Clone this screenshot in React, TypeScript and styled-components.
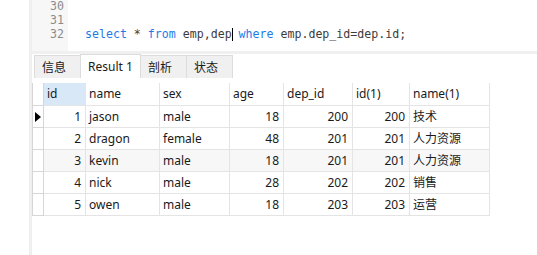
import React from 'react'
import styled, { createGlobalStyle } from 'styled-components'

const GlobalStyle = createGlobalStyle`
  html, body {
    margin: 0;
    padding: 0;
    background: #ffffff;
  }
  body {
    width: 537px;
    height: 255px;
    overflow: hidden;
    font-family: "Noto Sans", "Noto Sans CJK SC", sans-serif;
  }
`

const UI_FONT = `"Noto Sans", "Noto Sans CJK SC", sans-serif`
const CODE_FONT = `"DejaVu Sans Mono", "Liberation Mono", monospace`

const Page = styled.div`
  display: flex;
  width: 537px;
  height: 255px;
`

const LeftBlank = styled.div`
  width: 29px;
  flex: none;
  background: #ffffff;
`

const Divider = styled.div`
  width: 3px;
  flex: none;
  background: #efefef;
`

const Main = styled.div`
  flex: 1;
  display: flex;
  flex-direction: column;
  min-width: 0;
`

const Editor = styled.div`
  height: 51px;
  display: flex;
  overflow: hidden;
  flex: none;
`

const Gutter = styled.div`
  width: 32px;
  padding-right: 4px;
  background: #f7f7f7;
  font-family: ${CODE_FONT};
  font-size: 11.6px;
  line-height: 14px;
  color: #8c8c8c;
  text-align: right;
  margin-top: -1px;
`

const CodeArea = styled.div`
  flex: 1;
  padding-left: 17px;
  font-family: ${CODE_FONT};
  font-size: 11.6px;
  line-height: 14px;
  color: #3c3c3c;
  white-space: pre;
  margin-top: -1px;
`

const CodeLine = styled.div`
  height: 14px;
`

const Keyword = styled.span`
  color: #1f7ae8;
`

const Caret = styled.span`
  display: inline-block;
  width: 1px;
  height: 13px;
  background: #000;
  vertical-align: -3px;
  margin-right: -1px;
`

const Band = styled.div`
  height: 3px;
  background: #f0f0f0;
  flex: none;
`

const TabBar = styled.div`
  height: 24px;
  display: flex;
  align-items: flex-end;
  padding-left: 2px;
  flex: none;
`

const Tab = styled.div<{ $active?: boolean; $w: number }>`
  box-sizing: border-box;
  width: ${p => p.$w}px;
  height: ${p => (p.$active ? 24 : 23)}px;
  padding: 0 7px;
  display: flex;
  align-items: center;
  font-family: ${UI_FONT};
  font-size: 12px;
  color: #1a1a1a;
  background: ${p => (p.$active ? '#ffffff' : '#f0f0f0')};
  border: 1px solid #dcdcdc;
  border-bottom: none;
  & + & {
    margin-left: -1px;
  }
`

const Table = styled.table<{ $w: number }>`
  margin-top: 5px;
  width: ${p => p.$w}px;
  border-collapse: collapse;
  table-layout: fixed;
  font-family: ${UI_FONT};
  font-size: 12px;
  color: #1a1a1a;
`

const HeadCell = styled.th<{ $sorted?: boolean }>`
  height: 22px;
  box-sizing: border-box;
  padding: 0 3px;
  text-align: left;
  font-weight: normal;
  background: ${p => (p.$sorted ? '#d9e8f7' : '#ffffff')};
  border: 1px solid #e4e4e4;
  border-top: none;
`

const Indicator = styled.td`
  height: 22px;
  box-sizing: border-box;
  padding: 0;
  border: 1px solid #d6d6d6;
  border-top: none;
  background: #ffffff;
  position: relative;
`

const IndicatorHead = styled(Indicator).attrs({ as: 'th' })``

const Arrow = styled.span`
  position: absolute;
  left: 2px;
  top: 6px;
  width: 0;
  height: 0;
  border-top: 5px solid transparent;
  border-bottom: 5px solid transparent;
  border-left: 6px solid #000;
`

const Row = styled.tr<{ $shade?: boolean }>`
  background: ${p => (p.$shade ? '#f7f7f7' : '#ffffff')};
`

const Cell = styled.td<{ $num?: boolean }>`
  height: 22px;
  box-sizing: border-box;
  padding: ${p => (p.$num ? '0 4px 0 3px' : '0 3px')};
  text-align: ${p => (p.$num ? 'right' : 'left')};
  border: 1px solid #e4e4e4;
  white-space: nowrap;
  overflow: hidden;
`

const INDICATOR_W = 11

const columns = [
  { name: 'id', w: 42, sorted: true },
  { name: 'name', w: 74 },
  { name: 'sex', w: 70 },
  { name: 'age', w: 54 },
  { name: 'dep_id', w: 69 },
  { name: 'id(1)', w: 57 },
  { name: 'name(1)', w: 80 },
]

const rows = [
  [1, 'jason', 'male', 18, 200, 200, '技术'],
  [2, 'dragon', 'female', 48, 201, 201, '人力资源'],
  [3, 'kevin', 'male', 18, 201, 201, '人力资源'],
  [4, 'nick', 'male', 28, 202, 202, '销售'],
  [5, 'owen', 'male', 18, 203, 203, '运营'],
]

const tabs = [
  { label: '信息', w: 47 },
  { label: 'Result 1', w: 61, active: true },
  { label: '剖析', w: 47 },
  { label: '状态', w: 47 },
]

const tableWidth = columns.reduce((s, c) => s + c.w, INDICATOR_W)

export default function App() {
  return (
    <>
      <GlobalStyle />
      <Page>
        <LeftBlank />
        <Divider />
        <Main>
          <Editor>
            <Gutter>
              <CodeLine>30</CodeLine>
              <CodeLine>31</CodeLine>
              <CodeLine>32</CodeLine>
            </Gutter>
            <CodeArea>
              <CodeLine> </CodeLine>
              <CodeLine> </CodeLine>
              <CodeLine>
                <Keyword>select</Keyword> * <Keyword>from</Keyword> emp,dep<Caret /> <Keyword>where</Keyword> emp.dep_id=dep.id;
              </CodeLine>
            </CodeArea>
          </Editor>
          <Band />
          <TabBar>
            {tabs.map(t => (
              <Tab key={t.label} $w={t.w} $active={t.active}>{t.label}</Tab>
            ))}
          </TabBar>
          <Table $w={tableWidth}>
            <colgroup>
              <col style={{ width: INDICATOR_W }} />
              {columns.map(c => (
                <col key={c.name} style={{ width: c.w }} />
              ))}
            </colgroup>
            <thead>
              <tr>
                <IndicatorHead />
                {columns.map(c => (
                  <HeadCell key={c.name} $sorted={c.sorted}>{c.name}</HeadCell>
                ))}
              </tr>
            </thead>
            <tbody>
              {rows.map((r, i) => (
                <Row key={i} $shade={i === 2}>
                  <Indicator>{i === 0 && <Arrow />}</Indicator>
                  {r.map((v, j) => (
                    <Cell key={j} $num={typeof v === 'number'}>{v}</Cell>
                  ))}
                </Row>
              ))}
            </tbody>
          </Table>
        </Main>
      </Page>
    </>
  )
}
